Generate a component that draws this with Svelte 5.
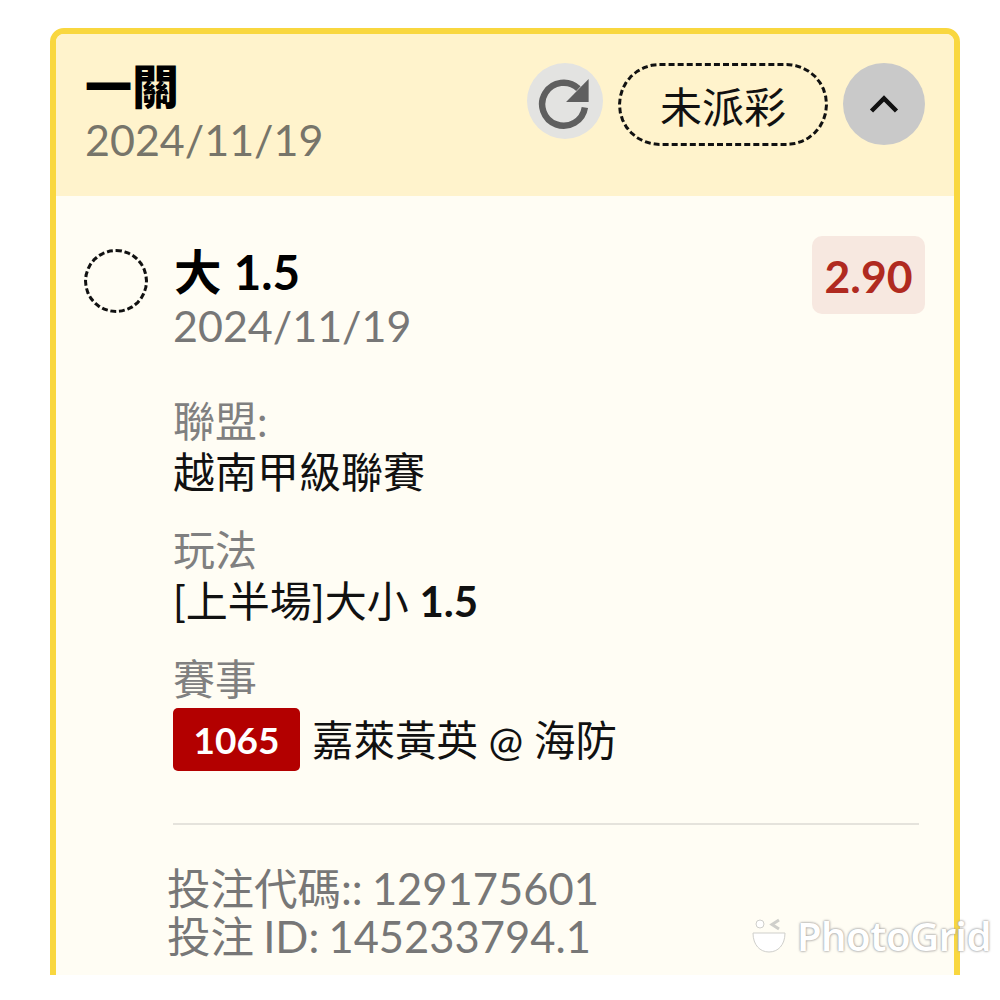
<script>
  const sections = [
    { label: "聯盟:", value: "越南甲級聯賽" },
    { label: "玩法", value: "[上半場]大小 ", strong: "1.5" }
  ];
</script>

<div class="page">
  <div class="card">
    <header class="head">
      <div class="head-text">
        <h1>一關</h1>
        <div class="date">2024/11/19</div>
      </div>
      <div class="actions">
        <button class="refresh" aria-label="refresh">
          <svg width="58" height="58" viewBox="0 0 54 54">
            <path d="M39.5 15.5A20 20 0 1 0 45.5 33" fill="none" stroke="#5f5f5f" stroke-width="6" />
            <path d="M49 6.500V28H28Z" fill="#5f5f5f" />
          </svg>
        </button>
        <span class="status">未派彩</span>
        <button class="toggle" aria-label="collapse">
          <svg width="32" height="22" viewBox="0 0 32 22">
            <path d="M3.5 18 16 5.5 28.500 18" fill="none" stroke="#111" stroke-width="4.500" />
          </svg>
        </button>
      </div>
    </header>

    <div class="body">
      <div class="bet">
        <span class="dot"></span>
        <div class="bet-main">
          <div class="bet-title"><b>大</b> <b>1.5</b></div>
          <div class="date date-body">2024/11/19</div>
        </div>
        <div class="odds">2.90</div>
      </div>

      <div class="details">
        {#each sections as s}
          <div class="item">
            <div class="label">{s.label}</div>
            <div class="value">{s.value}{#if s.strong}<b>{s.strong}</b>{/if}</div>
          </div>
        {/each}
        <div class="item">
          <div class="label">賽事</div>
          <div class="match">
            <span class="code">1065</span>
            <span class="value match-name">嘉萊黃英 @ 海防</span>
          </div>
        </div>
      </div>

      <hr />

      <div class="ids">
        <div>投注代碼:: 129175601</div>
        <div>投注 ID: 145233794.1</div>
      </div>
    </div>
  </div>

  <div class="watermark">
    <svg width="36" height="36" viewBox="0 0 36 36">
      <circle cx="9" cy="6" r="4" fill="#fff" stroke="#cfcfcb" stroke-width="1" />
      <path d="M28 2 21 6.500 28 11" fill="none" stroke="#cfcfcb" stroke-width="3" />
      <path d="M2 15H34C34 27 27 34 18 34S2 27 2 15Z" fill="#fff" stroke="#cfcfcb" stroke-width="1" />
    </svg>
    <span>PhotoGrid</span>
  </div>
</div>

<style>
  :global(body) {
    margin: 0;
    background: #fff;
  }
  .page {
    position: relative;
    width: 1000px;
    height: 975px;
    padding: 28px 40px 0 50px;
    box-sizing: border-box;
    overflow: hidden;
    font-family: Lato, "Noto Sans CJK TC", sans-serif;
    color: #111;
  }
  .card {
    border: 6px solid #f9d73f;
    border-radius: 14px;
    background: #fffdf4;
    height: 1100px;
    overflow: hidden;
  }
  .head {
    display: flex;
    justify-content: space-between;
    height: 162px;
    background: #fff3cc;
    padding: 0 29px;
  }
  .head-text { padding-top: 25px; }
  h1 {
    margin: 0;
    font-size: 47px;
    line-height: 54px;
    font-weight: 900;
    color: #000;
  }
  .date {
    margin-top: 5px;
    font-size: 43px;
    line-height: 44px;
    color: #77756a;
  }
  .actions {
    display: flex;
    align-items: flex-start;
    gap: 15px;
    padding-top: 29px;
  }
  button {
    border: none;
    padding: 0;
    display: flex;
    align-items: center;
    justify-content: center;
    border-radius: 50%;
  }
  .refresh {
    width: 76px;
    height: 76px;
    background: #e3e3e1;
  }
  .status {
    width: 210px;
    height: 83px;
    box-sizing: border-box;
    border: 3px dashed #111;
    border-radius: 42px;
    display: flex;
    align-items: center;
    justify-content: center;
    font-size: 42px;
    color: #111;
  }
  .toggle {
    width: 82px;
    height: 82px;
    background: #c9c9c9;
  }
  .body { padding: 40px 29px 0 28px; }
  .bet { display: flex; align-items: flex-start; }
  .dot {
    width: 64px;
    height: 64px;
    box-sizing: border-box;
    margin-top: 13px;
    border: 3px dashed #111;
    border-radius: 50%;
  }
  .bet-main { margin-left: 26px; flex: 1; }
  .bet-title {
    padding-top: 8px;
    font-size: 47.5px;
    line-height: 56px;
    color: #000;
  }
  .date-body {
    color: #777;
    line-height: 46px;
    margin-top: 3px;
    margin-left: -1px;
  }
  .odds {
    width: 113px;
    height: 78px;
    display: flex;
    align-items: center;
    justify-content: center;
    background: #f7e8e0;
    border-radius: 10px;
    color: #b02a20;
    font-size: 44.5px;
    font-weight: 700;
  }
  .details {
    margin: 47px 0 0 89px;
    display: flex;
    flex-direction: column;
    gap: 27px;
  }
  .label {
    font-size: 42px;
    line-height: 50px;
    color: #808080;
  }
  .value {
    font-size: 42px;
    line-height: 52px;
    color: #111;
  }
  .match {
    display: flex;
    align-items: center;
    gap: 12px;
    margin-top: 4px;
  }
  .match-name { font-size: 41.5px; }
  .code {
    width: 127px;
    height: 63px;
    display: flex;
    align-items: center;
    justify-content: center;
    background: #b30000;
    border-radius: 5px;
    color: #fff;
    font-size: 37px;
    font-weight: 700;
  }
  hr {
    margin: 52px 6px 0 89px;
    border: none;
    border-top: 2px solid #e5e3dc;
  }
  .ids {
    margin: 39px 0 0 83px;
    font-size: 43.500px;
    line-height: 48px;
    word-spacing: -2px;
    color: #777;
  }
  .watermark {
    position: absolute;
    left: 751px;
    top: 914px;
    display: flex;
    align-items: center;
    gap: 10px;
    font-family: "Noto Sans", sans-serif;
    font-size: 40px;
    line-height: 44px;
    font-weight: 600;
    color: #fff;
    text-shadow: 0 0 2px #999, 0 0 3px #aaa;
    letter-spacing: -0.5px;
  }
</style>
